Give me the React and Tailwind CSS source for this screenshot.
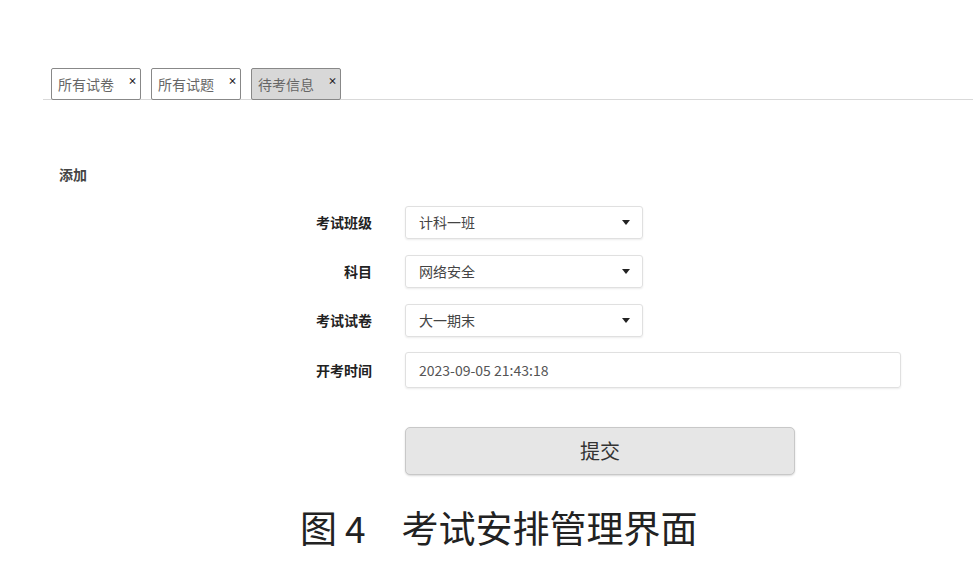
import React from "react";

const tabs = [
  { label: "所有试卷", active: false },
  { label: "所有试题", active: false },
  { label: "待考信息", active: true },
];

const selects = [
  { label: "考试班级", value: "计科一班" },
  { label: "科目", value: "网络安全" },
  { label: "考试试卷", value: "大一期末" },
];

const font = { fontFamily: '"Noto Sans CJK SC", "Noto Sans", sans-serif' };

export default function App() {
  return (
    <div className="w-[973px] h-[568px] bg-white overflow-hidden text-[#333]" style={font}>
      {/* Tabs */}
      <div className="ml-[43px] pt-[68px] border-b border-[#d9d9d9] flex gap-[10px] pl-[8px] pb-0">
        {tabs.map((t) => (
          <div
            key={t.label}
            className={`relative w-[90px] h-[32px] border border-[#888] rounded-[2px] flex items-center pl-[6px] text-[14px] text-[#666] mb-[-1px] ${
              t.active ? "bg-[#d8d8d8]" : "bg-white"
            }`}
          >
            {t.label}
            <span className="absolute right-[3px] top-[7px] text-[9px] leading-none text-[#222] font-bold">×</span>
          </div>
        ))}
      </div>

      {/* Section title */}
      <div className="ml-[59px] mt-[64px] text-[14px] font-bold text-[#444]">添加</div>

      {/* Form */}
      <div className="mt-[21px] flex flex-col">
        {selects.map((s, i) => (
          <div key={s.label} className={`flex items-center ${i > 0 ? "mt-[16px]" : ""}`}>
            <div className="w-[372px] text-right text-[14px] font-bold text-[#222]">{s.label}</div>
            <div className="ml-[33px] w-[238px] h-[33px] border border-[#e0e0e0] rounded-[3px] shadow-[0_1px_2px_rgba(0,0,0,0.08)] flex items-center justify-between pl-[13px] pr-[12px] text-[14px] text-[#444]">
              <span>{s.value}</span>
              <svg width="8" height="5" viewBox="0 0 8 5">
                <path d="M0 0 L8 0 L4 5 Z" fill="#222" />
              </svg>
            </div>
          </div>
        ))}
        <div className="flex items-center mt-[15px]">
          <div className="w-[372px] text-right text-[14px] font-bold text-[#222]">开考时间</div>
          <div className="ml-[33px] w-[496px] h-[36px] border border-[#e0e0e0] rounded-[3px] shadow-[0_1px_2px_rgba(0,0,0,0.08)] flex items-center pl-[13px] text-[14px] text-[#555]">
            2023-09-05 21:43:18
          </div>
        </div>
        <div className="flex mt-[39px] ml-[405px]">
          <button className="w-[390px] h-[48px] bg-[#e6e6e6] border border-[#c8c8c8] rounded-[5px] shadow-[0_1px_2px_rgba(0,0,0,0.15)] text-[20px] text-[#333]">
            提交
          </button>
        </div>
      </div>

      {/* Caption */}
      <div className="mt-[30px] ml-[300px] flex items-center text-[37px] leading-[44px] text-[#222]">
        <span>图</span>
        <span className="ml-[8px]">4</span>
        <span className="ml-[36px]">考试安排管理界面</span>
      </div>
    </div>
  );
}
